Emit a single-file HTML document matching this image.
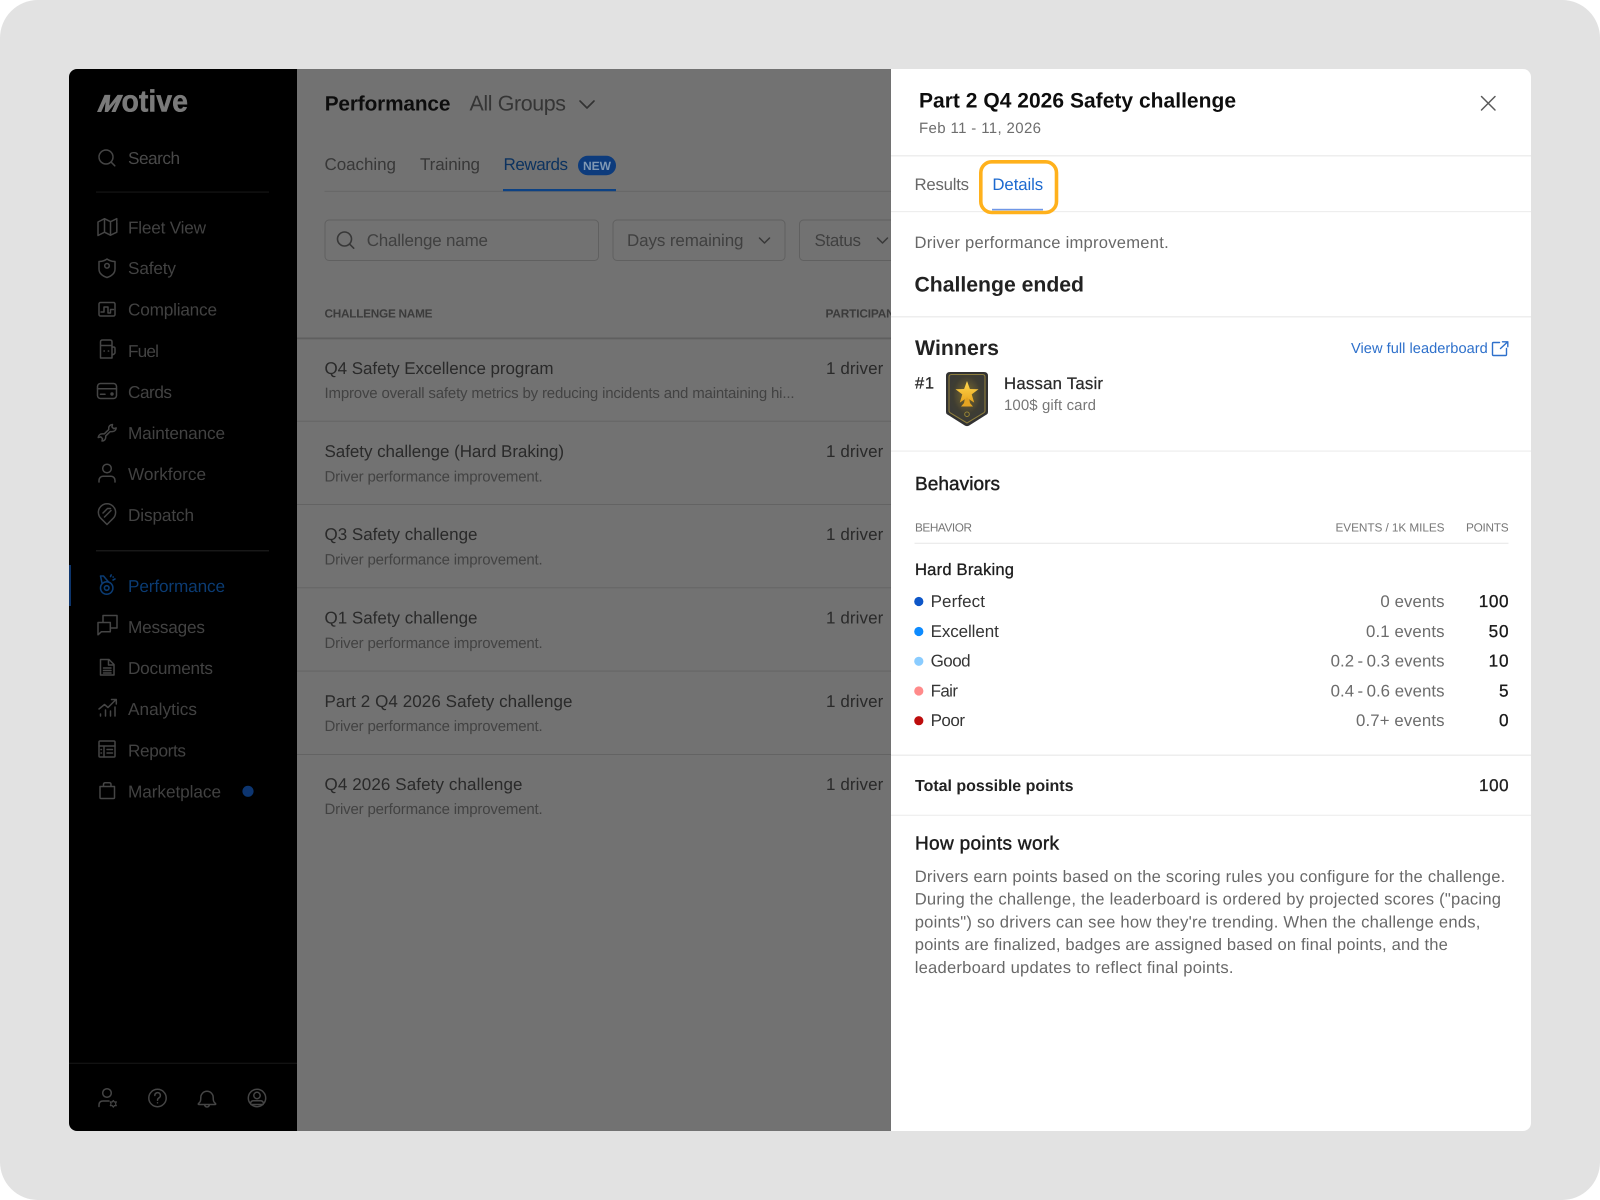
<!DOCTYPE html>
<html lang="en">
<head>
<meta charset="utf-8">
<title>Part 2 Q4 2026 Safety challenge</title>
<style>
html,body{margin:0;padding:0;background:#fff;width:1600px;height:1200px;overflow:hidden}
svg{display:block}
text{font-family:"Liberation Sans",Arial,sans-serif;text-rendering:geometricPrecision;white-space:pre}
.nav{font-size:17.2px;fill:#424242}
.ic{fill:none;stroke:#454545;stroke-width:1.5;stroke-linecap:round;stroke-linejoin:round}
.rt{font-size:17px;fill:#292929}
.rs{font-size:15px;fill:#434343}
.body{font-size:16.6px;fill:#686868}
.row{font-size:17px;fill:#363636}
.val{font-size:16.8px;fill:#6c6c6c}
.pt{font-size:17.2px;fill:#1a1a1a;stroke:#1a1a1a;stroke-width:.3}
.th{font-size:11.8px;fill:#777}
</style>
</head>
<body>
<svg xmlns="http://www.w3.org/2000/svg" width="1600" height="1200" viewBox="0 0 1600 1200">
<defs>
<filter id="s" filterUnits="userSpaceOnUse" x="0" y="0" width="1600" height="1200"><feGaussianBlur stdDeviation="0.32"/></filter>
<clipPath id="card"><rect x="69" y="69" width="1462" height="1062" rx="8"/></clipPath>
<radialGradient id="glow" cx="50%" cy="42%" r="55%"><stop offset="0" stop-color="#7d6c2c"/><stop offset="0.7" stop-color="#3f3d32"/><stop offset="1" stop-color="#3a3a37"/></radialGradient>
<linearGradient id="gold" x1="0" y1="0" x2="0" y2="1"><stop offset="0" stop-color="#ffd84f"/><stop offset="1" stop-color="#e9a51d"/></linearGradient>
</defs>

<rect x="0" y="0" width="1600" height="1200" rx="38" fill="#e2e2e2"/>

<g clip-path="url(#card)" filter="url(#s)">
<!-- main -->
<rect x="297" y="69" width="600" height="1062" fill="#727272"/>
<text x="324.7" y="110.5" font-size="20.8" font-weight="700" fill="#0f0f0f" textLength="125.7">Performance</text>
<text x="469.5" y="110.5" font-size="21.4" fill="#343434" textLength="96.5">All Groups</text>
<path d="M580 101l7 7 7-7" fill="none" stroke="#303030" stroke-width="1.6" stroke-linecap="round" stroke-linejoin="round"/>

<text x="324.5" y="170" class="rt" style="fill:#383838" textLength="71.5">Coaching</text>
<text x="420" y="170" class="rt" style="fill:#383838" textLength="60">Training</text>
<text x="503.5" y="170" class="rt" style="fill:#08325f" textLength="64.5">Rewards</text>
<rect x="578" y="155.7" width="38" height="19.6" rx="9.8" fill="#093a7c"/>
<text x="583" y="170" font-size="12" font-weight="700" fill="#8098b4" textLength="28">NEW</text>
<rect x="324.5" y="190.8" width="570" height="1" fill="#666"/>
<rect x="503" y="189" width="113" height="2.2" fill="#0a4284"/>

<rect x="325" y="220" width="273.5" height="40.5" rx="4" fill="none" stroke="#606060"/>
<circle cx="344.5" cy="239" r="7" fill="none" stroke="#383838" stroke-width="1.6"/>
<path d="M349.7 244.2l4 4" stroke="#383838" stroke-width="1.6" stroke-linecap="round"/>
<text x="366.7" y="246" class="rt" style="fill:#404040" textLength="121.3">Challenge name</text>
<rect x="613" y="220" width="172" height="40.5" rx="4" fill="none" stroke="#606060"/>
<text x="627" y="246" class="rt" style="fill:#404040" textLength="116.5">Days remaining</text>
<path d="M759.5 238l5 5 5-5" fill="none" stroke="#383838" stroke-width="1.5" stroke-linecap="round" stroke-linejoin="round"/>
<rect x="799.5" y="220" width="110" height="40.5" rx="4" fill="none" stroke="#606060"/>
<text x="814.5" y="246" class="rt" style="fill:#404040" textLength="46.5">Status</text>
<path d="M877.5 238l5 5 5-5" fill="none" stroke="#383838" stroke-width="1.5" stroke-linecap="round" stroke-linejoin="round"/>

<text x="324.5" y="317.5" font-size="11.8" font-weight="700" fill="#3a3a3a" textLength="108">CHALLENGE NAME</text>
<text x="825.5" y="317.5" font-size="11.8" font-weight="700" fill="#3a3a3a" textLength="84">PARTICIPANTS</text>
<rect x="297" y="337.5" width="600" height="1.8" fill="#5f5f5f"/>

<text x="324.5" y="373.8" class="rt" textLength="229">Q4 Safety Excellence program</text>
<text x="324.5" y="398" class="rs" textLength="470">Improve overall safety metrics by reducing incidents and maintaining hi...</text>
<text x="826" y="373.8" class="rt" textLength="57.3">1 driver</text>
<rect x="297" y="420.7" width="600" height="1" fill="#646464"/>

<text x="324.5" y="457" class="rt" textLength="239.5">Safety challenge (Hard Braking)</text>
<text x="324.5" y="481.5" class="rs" textLength="218.2">Driver performance improvement.</text>
<text x="826" y="457" class="rt" textLength="57.3">1 driver</text>
<rect x="297" y="504" width="600" height="1" fill="#646464"/>

<text x="324.5" y="540.2" class="rt" textLength="153">Q3 Safety challenge</text>
<text x="324.5" y="564.5" class="rs" textLength="218.2">Driver performance improvement.</text>
<text x="826" y="540.2" class="rt" textLength="57.3">1 driver</text>
<rect x="297" y="587.3" width="600" height="1" fill="#646464"/>

<text x="324.5" y="623.6" class="rt" textLength="153">Q1 Safety challenge</text>
<text x="324.5" y="648" class="rs" textLength="218.2">Driver performance improvement.</text>
<text x="826" y="623.6" class="rt" textLength="57.3">1 driver</text>
<rect x="297" y="670.6" width="600" height="1" fill="#646464"/>

<text x="324.5" y="706.8" class="rt" textLength="248">Part 2 Q4 2026 Safety challenge</text>
<text x="324.5" y="731" class="rs" textLength="218.2">Driver performance improvement.</text>
<text x="826" y="706.8" class="rt" textLength="57.3">1 driver</text>
<rect x="297" y="754" width="600" height="1" fill="#646464"/>

<text x="324.5" y="790" class="rt" textLength="198">Q4 2026 Safety challenge</text>
<text x="324.5" y="814" class="rs" textLength="218.2">Driver performance improvement.</text>
<text x="826" y="790" class="rt" textLength="57.3">1 driver</text>

<!-- sidebar -->
<rect x="69" y="69" width="228" height="1062" fill="#000"/>
<text transform="translate(96 111.6) skewX(-24)" x="0" y="0" font-size="23.500" font-weight="700" fill="#7a7a7a" stroke="#7a7a7a" stroke-width=".9" textLength="21" lengthAdjust="spacingAndGlyphs">M</text>
<text x="121.500" y="111.600" font-size="30.500" font-weight="700" fill="#7a7a7a" stroke="#7a7a7a" stroke-width=".5" textLength="66.500" lengthAdjust="spacingAndGlyphs">otive</text>

<circle class="ic" cx="106" cy="157" r="7"/><path class="ic" d="M111.2 162.2l3.6 3.6"/>
<text x="128" y="163.8" class="nav" style="fill:#4a4a4a" textLength="52">Search</text>
<rect x="96" y="191.6" width="173" height="1" fill="#1e1e1e"/>

<path class="ic" d="M98 222l6.5-3.3 6 3 6.3-3v13.5l-6.3 3-6-3-6.5 3.300zM104.500 218.700v13.500M110.500 221.700v13.500"/>
<text x="128" y="233.400" class="nav" textLength="78">Fleet View</text>

<path class="ic" d="M99 261.500q4.500 0 8-2.500 3.500 2.500 8 2.500v7.500c0 4.500-3.500 7-8 8.500-4.500-1.500-8-4-8-8.500zM109.300 265.800a2.300 2.300 0 1 1-4.600 0 2.300 2.300 0 0 1 4.600 0z"/>
<text x="128" y="274" class="nav" textLength="48">Safety</text>

<rect class="ic" x="99" y="302.500" width="16" height="13.500" rx="1.500"/><path class="ic" d="M101 312h3v-5h4v6h2.500v-3.500h3"/>
<text x="128" y="315.500" class="nav" textLength="89">Compliance</text>

<path class="ic" d="M100.500 342q0-2 2-2h7.500q2 0 2 2v16h-11.500zM100.500 345.500h11.500M112 347h1.500q1.500 0 1.500 1.500v4q0 1.500-3 2.500M104 351h.3M108.300 351h.3"/>
<text x="128" y="357" class="nav" textLength="31">Fuel</text>

<rect class="ic" x="97.500" y="383.500" width="19" height="15" rx="3"/><path class="ic" d="M97.500 388.800h19M100.500 394.200h4.500"/><circle cx="112" cy="394" r="1.700" fill="#454545"/>
<text x="128" y="398" class="nav" textLength="44">Cards</text>

<path class="ic" d="M112.500 424.500c-2.200 0-3.800 1.600-3.800 3.600v1.500l-4.500 4.300h-2c-2.200 0-3.700 1.500-4 3.600l2.600-.6 1.700 1.700-.5 2.400c2.200 0 3.700-1.600 3.700-3.600v-1.500l4.500-4.300h2c2.200 0 3.700-1.500 4-3.600l-2.600.6-1.700-1.700z"/>
<text x="128" y="439" class="nav" textLength="97">Maintenance</text>

<circle class="ic" cx="107" cy="468.500" r="4.300"/><path class="ic" d="M99 482v-1.500c0-2.500 1.800-4.200 4-4.200h8c2.200 0 4 1.700 4 4.200V482"/>
<text x="128" y="480" class="nav" textLength="78">Workforce</text>

<path class="ic" d="M107 524.500l-5.800-5.800a8.600 8.600 0 1 1 11.600 0zM103 513l4.500-4.500h3M104.500 517l6.500-6.500"/>
<text x="128" y="521" class="nav" textLength="66">Dispatch</text>
<rect x="96" y="550.300" width="173" height="1" fill="#222"/>

<rect x="69" y="565" width="2" height="41" fill="#08366c"/>
<g fill="none" stroke="#083a72" stroke-width="1.600" stroke-linecap="round" stroke-linejoin="round">
<circle cx="106.700" cy="588" r="6.200"/><circle cx="106.700" cy="588" r="2.300"/>
<path d="M100.500 576h3l5 6M100.500 576l1.500 7M110.500 576.500l.7-1.500M113 580l2-1M113 577h.3"/>
</g>
<text x="128" y="592" class="nav" style="fill:#083a72" textLength="97">Performance</text>

<path class="ic" d="M103 622.500v-7h14v12.500h-6.500M98 622.500h12.300v9.300h-9l-3.300 3z"/>
<text x="128" y="633" class="nav" textLength="77">Messages</text>

<path class="ic" d="M100.500 659.500h8.500l5 5v10.500h-13.500zM108.500 659.500v5.500h5.500M103.500 668h7.500M103.500 670.500h7.500M103.500 673h7.500"/>
<text x="128" y="674" class="nav" textLength="85">Documents</text>

<path class="ic" d="M99 709l5.500-4.500 3.500 3 8-8M111.500 699.500h4.800v4.500M100.500 716v-2M105.500 716v-6M110.500 716v-5M115 716v-9"/>
<text x="128" y="715" class="nav" textLength="69">Analytics</text>

<rect class="ic" x="99" y="741" width="16" height="16" rx="1"/><path class="ic" d="M99 746h16M104 746v11M107 749.500h5.500M107 753h5.500M101 749.500h.5M101 753h.5"/>
<text x="128" y="756.500" class="nav" textLength="58">Reports</text>

<path class="ic" d="M100 786.500h14.500v11q0 1-1 1h-12.500q-1 0-1-1zM103.500 786.500v-2q0-1.800 1.800-1.800h3.900q1.800 0 1.800 1.800v2"/>
<text x="128" y="797.500" class="nav" textLength="93">Marketplace</text>
<circle cx="248" cy="791.300" r="5.600" fill="#083670"/>

<rect x="69" y="1062.800" width="228" height="1" fill="#151515"/>
<circle class="ic" cx="107" cy="1093" r="4.300"/><path class="ic" d="M99 1106.500v-1.500q0-4 4-4h6"/>
<path class="ic" style="stroke-width:1.200" d="M113.300 1100.500l1.100 1.500 1.900-.1-.8 1.900.8 1.900-1.900-.1-1.100 1.500-1.100-1.500-1.900.1.800-1.900-.8-1.900 1.900.1z"/>
<circle class="ic" cx="157.500" cy="1098" r="8.700"/><path class="ic" d="M154.800 1095.500a2.800 2.800 0 1 1 4.300 2.300c-1 .7-1.600 1.200-1.600 2.400M157.500 1102.700v.1"/>
<path class="ic" d="M198.500 1103.500c2-1.500 2.300-3 2.300-6a6.200 6.200 0 0 1 12.400 0c0 3 .3 4.500 2.300 6q.6 1-.5 1h-16q-1.100 0-.5-1zM204.500 1104.500q.5 2.500 2.500 2.500t2.500-2.500"/>
<circle class="ic" cx="257" cy="1098" r="8.700"/><circle class="ic" cx="257" cy="1095.500" r="3.200"/><path class="ic" d="M250.500 1103q.8-2.200 3-2.200h7q2.200 0 3 2.200M251 1104.500h12"/>

<!-- panel -->
<rect x="891" y="69" width="640" height="1062" fill="#fff"/>
<text x="919" y="107.500" font-size="21" font-weight="700" fill="#111" textLength="317">Part 2 Q4 2026 Safety challenge</text>
<text x="919" y="132.800" font-size="15" fill="#6e6e6e" textLength="122">Feb 11 - 11, 2026</text>
<path d="M1481.500 96.500l13.500 13.500M1495 96.500l-13.500 13.500" fill="none" stroke="#5a5a5a" stroke-width="1.500" stroke-linecap="round"/>
<rect x="891" y="155" width="640" height="1.500" fill="#eeeeee"/>

<text x="914.500" y="190.200" font-size="16.800" fill="#686868" textLength="54.500">Results</text>
<text x="992.400" y="190.200" font-size="16.800" fill="#1b69cf" textLength="50.800">Details</text>
<rect x="891" y="211" width="640" height="1.200" fill="#eeeeee"/>
<rect x="992" y="208.800" width="51" height="1.600" fill="#6f97e6"/>
<rect x="980.800" y="161.800" width="75.700" height="50.700" rx="11" fill="none" stroke="#ffb11f" stroke-width="3.600"/>

<text x="914.500" y="247.800" class="body" textLength="254.200">Driver performance improvement.</text>
<text x="914.500" y="291.500" font-size="21.200" font-weight="700" fill="#222" textLength="169.500">Challenge ended</text>
<rect x="891" y="316" width="640" height="1.500" fill="#eeeeee"/>

<text x="915" y="355" font-size="21.300" font-weight="700" fill="#222" textLength="84">Winners</text>
<text x="1351" y="353" font-size="14.600" fill="#2d70cb" textLength="136.800">View full leaderboard</text>
<path d="M1499.500 342.500h-6q-1 0-1 1v11q0 1 1 1h12q1 0 1-1v-6M1500.500 348.500l7-6.500M1502.500 341.800h5.300v5" fill="none" stroke="#2d70cb" stroke-width="1.400" stroke-linecap="round" stroke-linejoin="round"/>

<text x="915" y="388.500" font-size="16.400" fill="#2c2c2c" stroke="#2c2c2c" stroke-width=".3" textLength="19">#1</text>
<path d="M950 372h34q4 0 4 4v36q0 1.500-1 2.200l-18 11.400q-2 1-4 0l-18-11.400q-1-.7-1-2.200V376q0-4 4-4z" fill="#323232"/>
<path d="M951.500 374.500h31q2.500 0 2.500 2.500v34q0 1-1 1.700L967 423l-17-10.300q-1-.7-1-1.700V377q0-2.500 2.500-2.500z" fill="url(#glow)" stroke="#8d7d3c" stroke-width="1.100"/>
<path d="M965 398l-1 5-3 3.500h12l-3-3.500-1-5z" fill="#e4a420"/>
<path d="M967 381l2.900 8 8.600.2-6.800 5.200 2.500 8.200-7.200-4.900-7.200 4.900 2.500-8.200-6.800-5.200 8.600-.2z" fill="url(#gold)"/>
<circle cx="967" cy="414.200" r="2.300" fill="none" stroke="#a08a35" stroke-width=".9"/>

<text x="1004" y="388.800" font-size="16.800" fill="#2c2c2c" stroke="#2c2c2c" stroke-width=".25" textLength="99">Hassan Tasir</text>
<text x="1004" y="410" font-size="15" fill="#777" textLength="92">100$ gift card</text>
<rect x="891" y="450.500" width="640" height="1.200" fill="#eeeeee"/>

<text x="915" y="490" font-size="19" fill="#1f1f1f" stroke="#1f1f1f" stroke-width=".45" textLength="85">Behaviors</text>
<text x="915" y="531.500" class="th" textLength="57">BEHAVIOR</text>
<text x="1335.500" y="531.500" class="th" textLength="109">EVENTS / 1K MILES</text>
<text x="1466" y="531.500" class="th" textLength="42.600">POINTS</text>
<rect x="914.500" y="542.700" width="594" height="1.300" fill="#ececec"/>

<text x="915" y="575.200" font-size="16.600" fill="#1f1f1f" stroke="#1f1f1f" stroke-width=".3" textLength="99">Hard Braking</text>

<circle cx="918.800" cy="601.500" r="4.600" fill="#0b56c8"/>
<text x="930.600" y="607" class="row" textLength="54.400">Perfect</text>
<text x="1380.400" y="607" class="val" textLength="64.100">0 events</text>
<text x="1478.800" y="607" class="pt" textLength="29.800">100</text>

<circle cx="918.800" cy="631.500" r="4.600" fill="#0f8bff"/>
<text x="930.600" y="637.200" class="row" textLength="68.200">Excellent</text>
<text x="1366" y="637.200" class="val" textLength="78.500">0.1 events</text>
<text x="1488.600" y="637.200" class="pt" textLength="20">50</text>

<circle cx="918.800" cy="661.300" r="4.600" fill="#8accff"/>
<text x="930.600" y="666.500" class="row" textLength="40">Good</text>
<text x="1330.600" y="666.500" class="val" textLength="113.900">0.2&#8201;-&#8201;0.3 events</text>
<text x="1488.600" y="666.500" class="pt" textLength="20">10</text>

<circle cx="918.800" cy="691" r="4.600" fill="#ff8a8a"/>
<text x="930.600" y="696.400" class="row" textLength="27.400">Fair</text>
<text x="1330.600" y="696.400" class="val" textLength="113.900">0.4&#8201;-&#8201;0.6 events</text>
<text x="1499" y="696.400" class="pt" textLength="9.600">5</text>

<circle cx="918.800" cy="720.700" r="4.600" fill="#bd0a0a"/>
<text x="930.600" y="726" class="row" textLength="34.400">Poor</text>
<text x="1356" y="726" class="val" textLength="88.500">0.7+ events</text>
<text x="1499" y="726" class="pt" textLength="9.600">0</text>

<rect x="891" y="754.500" width="640" height="1.500" fill="#eeeeee"/>
<text x="915" y="791" font-size="16" font-weight="700" fill="#222" textLength="158.500">Total possible points</text>
<text x="1479" y="791" font-size="17" fill="#222" stroke="#222" stroke-width=".3" textLength="29.600">100</text>
<rect x="891" y="814.700" width="640" height="1.200" fill="#eeeeee"/>

<text x="915" y="849.300" font-size="19" fill="#1f1f1f" stroke="#1f1f1f" stroke-width=".45" textLength="144">How points work</text>
<text x="914.700" y="881.800" class="body" textLength="590.600">Drivers earn points based on the scoring rules you configure for the challenge.</text>
<text x="914.700" y="904.500" class="body" textLength="586.300">During the challenge, the leaderboard is ordered by projected scores ("pacing</text>
<text x="914.700" y="927.500" class="body" textLength="565.700">points") so drivers can see how they're trending. When the challenge ends,</text>
<text x="914.700" y="950.200" class="body" textLength="533.100">points are finalized, badges are assigned based on final points, and the</text>
<text x="914.700" y="973.200" class="body" textLength="318.800">leaderboard updates to reflect final points.</text>
</g>
</svg>
</body>
</html>
